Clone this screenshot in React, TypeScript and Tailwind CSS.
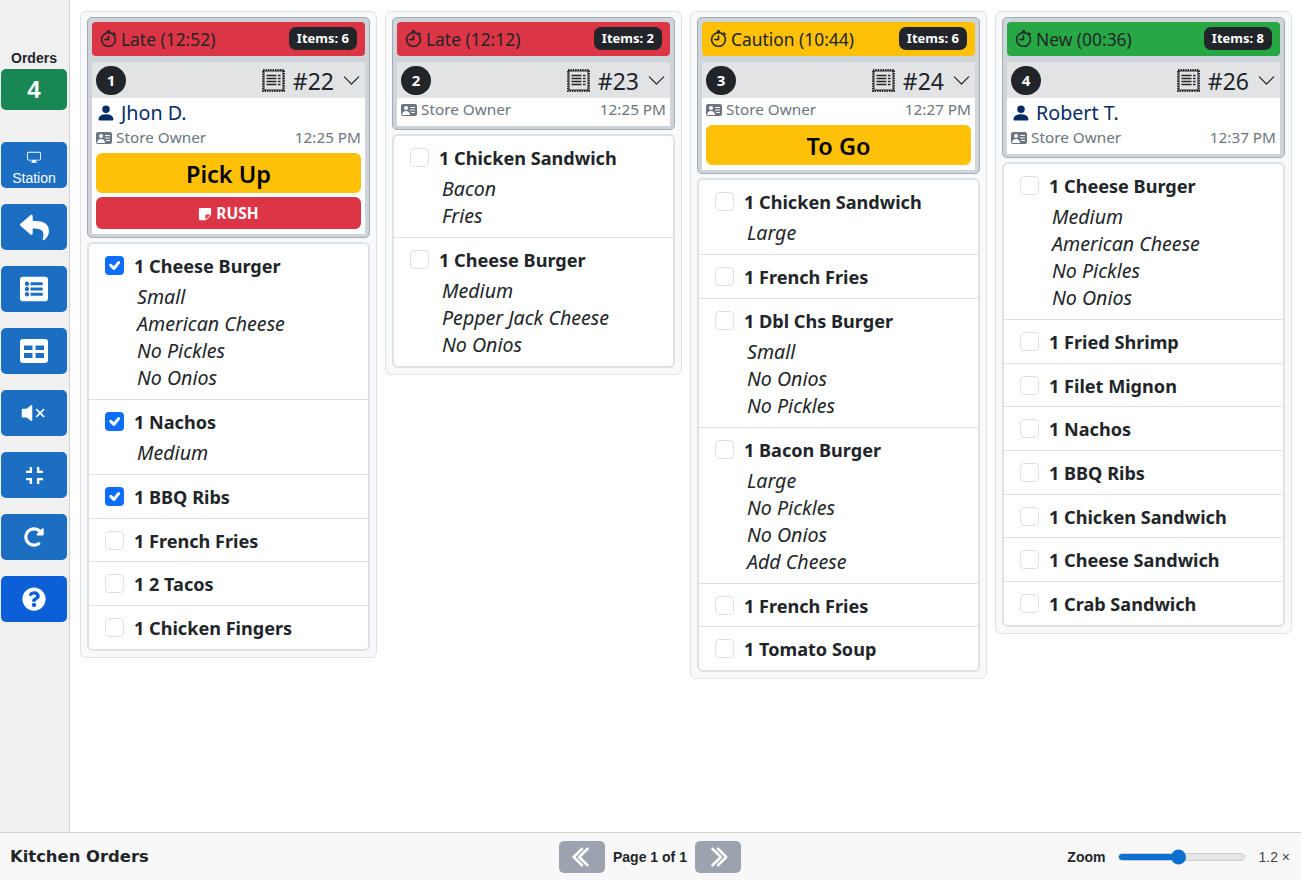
import {
  BsChevronDown,
  BsChevronDoubleLeft,
  BsChevronDoubleRight,
  BsCheck,
  BsDisplay,
  BsPersonFill,
  BsPersonVcardFill,
  BsStickyFill,
  BsStopwatch,
  BsVolumeMuteFill,
} from "react-icons/bs";
import { FaListAlt, FaQuestionCircle, FaRedoAlt, FaReply } from "react-icons/fa";
import { MdFullscreenExit } from "react-icons/md";

type Item = { name: string; mods?: string[]; done?: boolean };

type Order = {
  seq: number;
  status: string;
  tone: "late" | "caution" | "fresh";
  count: number;
  ticket: number;
  customer?: string;
  time: string;
  action?: string;
  rush?: boolean;
  items: Item[];
};

const ORDERS: Order[] = [
  {
    seq: 1,
    status: "Late (12:52)",
    tone: "late",
    count: 6,
    ticket: 22,
    customer: "Jhon D.",
    time: "12:25 PM",
    action: "Pick Up",
    rush: true,
    items: [
      { name: "1 Cheese Burger", done: true, mods: ["Small", "American Cheese", "No Pickles", "No Onios"] },
      { name: "1 Nachos", done: true, mods: ["Medium"] },
      { name: "1 BBQ Ribs", done: true },
      { name: "1 French Fries" },
      { name: "1 2 Tacos" },
      { name: "1 Chicken Fingers" },
    ],
  },
  {
    seq: 2,
    status: "Late (12:12)",
    tone: "late",
    count: 2,
    ticket: 23,
    time: "12:25 PM",
    items: [
      { name: "1 Chicken Sandwich", mods: ["Bacon", "Fries"] },
      { name: "1 Cheese Burger", mods: ["Medium", "Pepper Jack Cheese", "No Onios"] },
    ],
  },
  {
    seq: 3,
    status: "Caution (10:44)",
    tone: "caution",
    count: 6,
    ticket: 24,
    time: "12:27 PM",
    action: "To Go",
    items: [
      { name: "1 Chicken Sandwich", mods: ["Large"] },
      { name: "1 French Fries" },
      { name: "1 Dbl Chs Burger", mods: ["Small", "No Onios", "No Pickles"] },
      { name: "1 Bacon Burger", mods: ["Large", "No Pickles", "No Onios", "Add Cheese"] },
      { name: "1 French Fries" },
      { name: "1 Tomato Soup" },
    ],
  },
  {
    seq: 4,
    status: "New (00:36)",
    tone: "fresh",
    count: 8,
    ticket: 26,
    customer: "Robert T.",
    time: "12:37 PM",
    items: [
      { name: "1 Cheese Burger", mods: ["Medium", "American Cheese", "No Pickles", "No Onios"] },
      { name: "1 Fried Shrimp" },
      { name: "1 Filet Mignon" },
      { name: "1 Nachos" },
      { name: "1 BBQ Ribs" },
      { name: "1 Chicken Sandwich" },
      { name: "1 Cheese Sandwich" },
      { name: "1 Crab Sandwich" },
    ],
  },
];

const TONES = {
  late: "bg-[#dc3545]",
  caution: "bg-[#ffc107]",
  fresh: "bg-[#28a745]",
};

// perforated ticket, none of the icon sets has this one
function TicketIcon() {
  return (
    <svg width="23" height="23" viewBox="0 0 23 23" fill="none" stroke="currentColor">
      <rect x="1" y="1" width="21" height="21" strokeWidth="2" strokeDasharray="1.4 1" />
      <rect x="2" y="2" width="19" height="19" strokeWidth="1" />
      <path d="M4.5 6.5h10M4.5 9.5h10M4.5 12.5h10M4.5 15.5h10M16 6.5h2.5M16 9.5h2.5M16 12.5h2.5M16 15.5h2.5" strokeWidth="1.3" />
    </svg>
  );
}

// solid table with two rows of two cut-out cells
function TableIcon() {
  return (
    <svg width="28" height="24" viewBox="0 0 28 24" fill="currentColor">
      <path
        fillRule="evenodd"
        d="M3 0h22a3 3 0 0 1 3 3v18a3 3 0 0 1-3 3H3a3 3 0 0 1-3-3V3a3 3 0 0 1 3-3ZM4 6.500v4.500h8.500V6.500ZM15.500 6.500v4.500H24V6.500ZM4 14v5h8.500v-5ZM15.500 14v5H24v-5Z"
      />
    </svg>
  );
}

function SideButton({ children }: { children: React.ReactNode }) {
  return (
    <button className="flex h-[46px] w-[66px] items-center justify-center rounded-[5px] bg-[#1b6ec2] text-white">
      {children}
    </button>
  );
}

function Sidebar() {
  return (
    <aside className="flex w-[70px] shrink-0 flex-col border-r border-[#d0d0d0] bg-[#f0f0f0] pl-px font-['Liberation_Sans',sans-serif]">
      <div className="mt-[50px] w-[66px] text-center text-[14px] leading-[16px] font-bold text-[#212529]">
        Orders
      </div>
      <div className="mt-[3px] flex h-[41px] w-[66px] items-center justify-center rounded-[5px] bg-[#198754] text-2xl font-bold text-white">
        4
      </div>
      <div className="mt-8 flex flex-col gap-4">
        <button className="flex h-[46px] w-[66px] flex-col items-center rounded-[5px] bg-[#1b6ec2] pt-2 text-white">
          <BsDisplay size={14} />
          <span className="mt-[5px] text-[14px] leading-[18px]">Station</span>
        </button>
        <SideButton>
          <FaReply size={29} />
        </SideButton>
        <SideButton>
          <FaListAlt size={28} />
        </SideButton>
        <SideButton>
          <TableIcon />
        </SideButton>
        <SideButton>
          <BsVolumeMuteFill size={28} />
        </SideButton>
        <SideButton>
          <MdFullscreenExit size={29} />
        </SideButton>
        <SideButton>
          <FaRedoAlt size={20} />
        </SideButton>
        <button className="flex h-[46px] w-[66px] items-center justify-center rounded-[5px] bg-[#0d5fd8] text-white">
          <FaQuestionCircle size={24} />
        </button>
      </div>
    </aside>
  );
}

function OrderHeader({ order }: { order: Order }) {
  return (
    <div className="rounded-[5px] border border-[#a3abb3] bg-[#ced4da] p-1 pb-[3px]">
      <div className={`flex h-[34px] items-center justify-between rounded-[4px] pr-2 pl-2 text-[#212529] ${TONES[order.tone]}`}>
        <div className="flex items-center gap-1 text-[17.4px]">
          <BsStopwatch size={17} className="stroke-[0.5px]" />
          <span>{order.status}</span>
        </div>
        <span className="mb-px rounded-[7px] bg-[#212529] px-2 py-[3px] text-[13px] leading-[17px] font-bold text-white">
          Items: {order.count}
        </span>
      </div>
      <div className="mt-[6px] flex h-9 items-center justify-between bg-[#e2e3e5] px-1">
        <span className="flex h-[29px] w-[30px] items-center justify-center rounded-full bg-[#212529] text-[15px] font-bold text-white">
          {order.seq}
        </span>
        <div className="flex items-center text-[#212529]">
          <TicketIcon />
          <span className="ml-2 pt-[2px] text-[23px] leading-none">#{order.ticket}</span>
          <BsChevronDown size={19} className="ml-[8px]" />
        </div>
      </div>
      <div className="bg-white px-1 pb-[5px]">
        {order.customer && (
          <div className="flex h-7 items-center gap-[5px] pt-px text-[19.7px] text-[#052c65]">
            <BsPersonFill size={20} />
            <span>{order.customer}</span>
          </div>
        )}
        <div className="flex h-[23px] items-center justify-between text-[15.3px] text-[#6c757d]">
          <span className="flex items-center gap-1">
            <BsPersonVcardFill size={16} />
            Store Owner
          </span>
          <span>{order.time}</span>
        </div>
        {order.action && (
          <div className="mt-1 flex h-10 items-center justify-center rounded-[6px] bg-[#ffc107] pt-[3px] text-[23.5px] font-semibold text-black">
            {order.action}
          </div>
        )}
        {order.rush && (
          <div className="mt-1 flex h-8 items-center justify-center gap-1 rounded-[6px] bg-[#dc3545] pt-px text-[15.5px] font-bold text-white">
            <BsStickyFill size={14} />
            RUSH
          </div>
        )}
      </div>
    </div>
  );
}

function ItemRow({ item }: { item: Item }) {
  return (
    <li className="border-b border-[#dee2e6] px-4 pt-[9px] pb-[8.670px] last:border-b-0">
      <div className="flex h-[25px] items-center gap-[10px]">
        {item.done ? (
          <span className="flex size-[19px] items-center justify-center rounded-[4px] bg-[#0d6efd] text-white">
            <BsCheck size={19} strokeWidth={1} />
          </span>
        ) : (
          <span className="size-[19px] rounded-[4px] border border-[#dee2e6] bg-white" />
        )}
        <span className="pt-[2px] text-[18.1px] font-bold text-[#212529]">{item.name}</span>
      </div>
      {item.mods && (
        <div className="mt-[5px] -mb-[0.670px] pl-[32px] text-[19.6px] leading-[27px] text-[#212529] italic">
          {item.mods.map((mod) => (
            <div key={mod}>{mod}</div>
          ))}
        </div>
      )}
    </li>
  );
}

function OrderCard({ order }: { order: Order }) {
  return (
    <section className="w-[297px] shrink-0 self-start rounded-[6px] border border-[#dee2e6] bg-[#f8f9fa] p-[6px] pt-[5px]">
      <OrderHeader order={order} />
      <ul className="mt-1 rounded-[6px] border-2 border-[#dee2e6] bg-white">
        {order.items.map((item, i) => (
          <ItemRow key={i} item={item} />
        ))}
      </ul>
    </section>
  );
}

export default function App() {
  return (
    <div className="flex h-[880px] flex-col overflow-hidden bg-white font-['Noto_Sans',sans-serif]">
      <div className="flex min-h-0 flex-1">
        <Sidebar />
        <main className="flex flex-1 gap-2 pt-[11px] pl-[10px]">
          {ORDERS.map((order) => (
            <OrderCard key={order.seq} order={order} />
          ))}
        </main>
      </div>
      <footer className="flex h-[48px] items-center border-t border-[#d0d0d0] bg-[#f8f8f8] pt-px pr-[11px] pl-[10px] font-['Liberation_Sans',sans-serif] text-[#212529]">
        <div className="w-[549px] font-['DejaVu_Sans',sans-serif] text-[16.4px] font-bold">Kitchen Orders</div>
        <div className="flex items-center gap-2">
          <button className="flex h-8 w-[46px] items-center justify-center rounded-[5px] bg-[#9ca3af] text-white">
            <BsChevronDoubleLeft size={22} strokeWidth={0.8} />
          </button>
          <span className="text-[14px] font-bold">Page 1 of 1</span>
          <button className="flex h-8 w-[46px] items-center justify-center rounded-[5px] bg-[#9ca3af] text-white">
            <BsChevronDoubleRight size={22} strokeWidth={0.8} />
          </button>
        </div>
        <div className="ml-auto flex items-center">
          <span className="text-[14px] font-bold">Zoom</span>
          <div className="relative ml-[13px] h-2 w-[127px] rounded-full border border-[#cfcfcf] bg-[#e6e6e6]">
            <div className="h-full w-[59px] rounded-full bg-[#0d6fcf]" />
            <span className="absolute top-1/2 left-[52px] size-[15px] -translate-y-1/2 rounded-full bg-[#0d6fcf]" />
          </div>
          <span className="ml-[13px] text-[14px] text-[#444]">1.2 ×</span>
        </div>
      </footer>
    </div>
  );
}
